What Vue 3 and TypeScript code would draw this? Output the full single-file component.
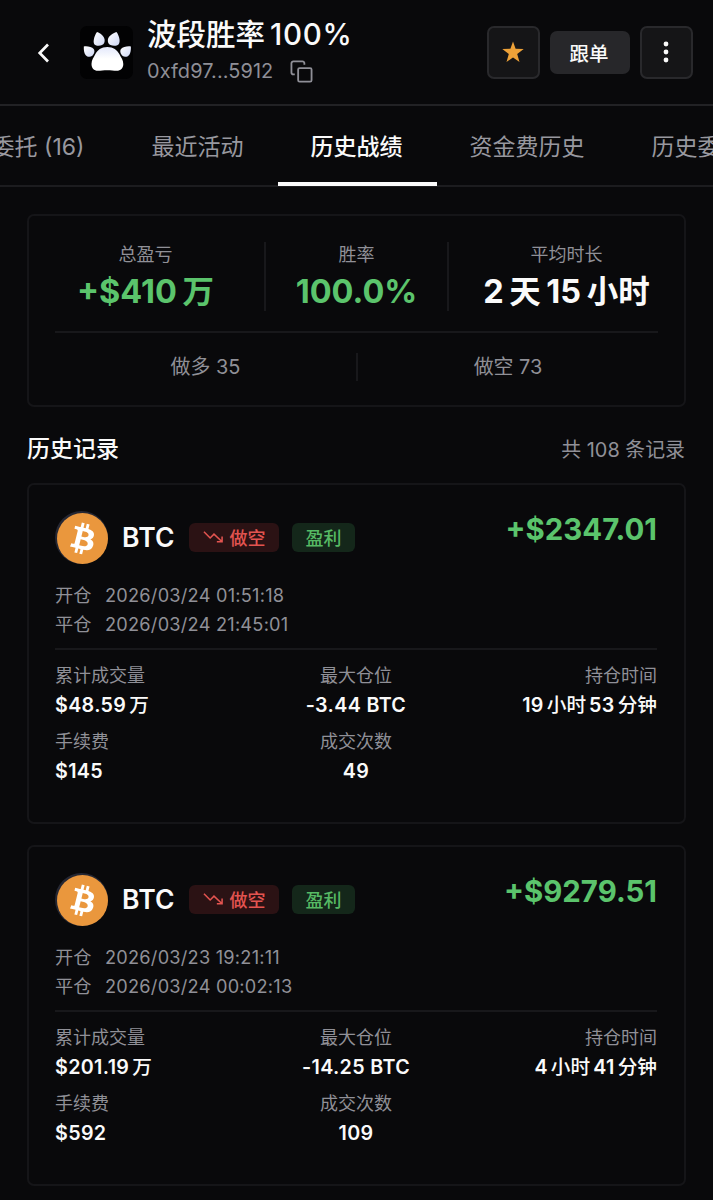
<script setup lang="ts">
interface Trade {
  pnl: string
  opened: string
  closed: string
  volume: string[]
  position: string
  duration: string[]
  fee: string
  fills: string
}

const tabs: string[] = ['当前委托 (16)', '最近活动', '历史战绩', '资金费历史', '历史委托']
const activeTab = '历史战绩'

const trades: Trade[] = [
  {
    pnl: '+$2347.01',
    opened: '2026/03/24 01:51:18',
    closed: '2026/03/24 21:45:01',
    volume: ['$48.59', '万'],
    position: '-3.44 BTC',
    duration: ['19', '小时', '53', '分钟'],
    fee: '$145',
    fills: '49',
  },
  {
    pnl: '+$9279.51',
    opened: '2026/03/23 19:21:11',
    closed: '2026/03/24 00:02:13',
    volume: ['$201.19', '万'],
    position: '-14.25 BTC',
    duration: ['4', '小时', '41', '分钟'],
    fee: '$592',
    fills: '109',
  },
]

const isHan = (part: string): boolean => /[\u4e00-\u9fff]/.test(part)
</script>

<template>
  <div class="page">
    <header class="header">
      <svg class="back" viewBox="0 0 14 22"><path d="M12 2.500 3.700 11l8.300 8.500" /></svg>
      <div class="avatar">
        <svg viewBox="0 0 53 53">
          <defs>
            <linearGradient id="toe" x1="0" y1="0" x2="1" y2="1">
              <stop offset="0" stop-color="#fff" />
              <stop offset="1" stop-color="#cdd6f4" />
            </linearGradient>
            <linearGradient id="pad" x1="0" y1="0" x2="0" y2="1">
              <stop offset="0" stop-color="#e3e8fb" />
              <stop offset=".5" stop-color="#fff" />
            </linearGradient>
          </defs>
          <g fill="url(#toe)">
            <path d="M17 6c3.800 1.200 7 4 7.600 7.500.4 2.600-.6 4.600-2.600 5.600-1.700.8-4.300 1-6.300.2-2-.8-2.400-3-1.800-6 .5-2.600 1.600-5.300 3.100-7.300z" />
            <path d="M36.500 6c-3.800 1.200-8 4-8.600 7.500-.4 2.600.6 4.600 2.600 5.600 1.700.8 4.800 1 6.800.2 2-.8 2.600-3 2.200-6-.4-2.600-1.500-5.300-3-7.300z" />
            <path d="M3.800 20.500c3.500-.5 8 .3 9.900 2.500 1.500 2.200.3 5-1.400 6.700-2.100 1.700-5 1.300-6.800-.8C4 27 3.700 24 3.800 20.500z" />
            <path d="M50.900 20.500c-3.500-.5-8 .3-9.900 2.500-1.500 2.200-.3 5 1.400 6.700 2.100 1.700 5 1.300 6.800-.8 1.500-1.900 1.800-4.900 1.700-8.400z" />
          </g>
          <path fill="url(#pad)" d="M27.300 21c6 0 10 3 12.300 7.600 1.400 3 3.700 5.400 3.700 9.400 0 4-2.600 6.800-6.600 6.800-3 0-5.700-.6-9.400-.6s-6.400.6-9.400.6c-4 0-6.400-2.800-6.400-6.800 0-4 2.200-6.400 3.600-9.400C17.400 24 21.300 21 27.300 21z" />
        </svg>
      </div>
      <div class="identity">
        <div class="name mixed"><span>波段胜率</span><span class="latin">100%</span></div>
        <div class="address">
          <span>0xfd97...5912</span>
          <svg viewBox="0 0 24 24"><path d="M15 5V3.500a2 2 0 0 0-2-2H3.500a2 2 0 0 0-2 2V13a2 2 0 0 0 2 2H5" /><rect x="8.500" y="8.500" width="14" height="14" rx="1.500" /></svg>
        </div>
      </div>
      <div class="actions">
        <button class="square">
          <svg class="star" viewBox="0 0 22 22"><path d="m11 .4 2.600 7.300 8.100.2-6.500 5 2.300 8.100-6.500-4.600L4.500 21l2.300-8.100-6.500-5 8.100-.2z" /></svg>
        </button>
        <button class="follow">跟单</button>
        <button class="square">
          <svg class="dots" viewBox="0 0 6 22"><circle cx="3" cy="3" r="2.400" /><circle cx="3" cy="11" r="2.400" /><circle cx="3" cy="19" r="2.400" /></svg>
        </button>
      </div>
    </header>

    <nav class="tabs">
      <div v-for="tab in tabs" :key="tab" class="tab" :class="{ active: tab === activeTab }">{{ tab }}</div>
    </nav>

    <main class="content">
      <section class="card summary">
        <div class="stats">
          <div class="stat">
            <div class="label">总盈亏</div>
            <div class="figure green mixed"><span>+$410</span><span class="han">万</span></div>
          </div>
          <div class="stat">
            <div class="label">胜率</div>
            <div class="figure green">100.0%</div>
          </div>
          <div class="stat">
            <div class="label">平均时长</div>
            <div class="figure mixed"><span>2</span><span class="han">天</span><span>15</span><span class="han">小时</span></div>
          </div>
        </div>
        <div class="sides">
          <div>做多 35</div>
          <div>做空 73</div>
        </div>
      </section>

      <div class="heading">
        <h2>历史记录</h2>
        <span>共 108 条记录</span>
      </div>

      <div class="list">
        <article v-for="trade in trades" :key="trade.opened" class="card trade">
          <div class="top">
            <div class="coin">
              <svg viewBox="0 0 32 32">
                <circle cx="16" cy="16" r="16" fill="#ea973d" />
                <path fill="#fff" d="M23.189 14.020c.314-2.096-1.283-3.223-3.465-3.975l.708-2.840-1.728-.430-.690 2.765c-.454-.114-.920-.220-1.385-.326l.695-2.783L15.596 6l-.708 2.839c-.376-.086-.746-.170-1.104-.260l.002-.009-2.384-.595-.460 1.846s1.283.294 1.256.312c.700.175.826.638.805 1.006l-.806 3.235c.048.012.110.030.180.057l-.183-.045-1.130 4.532c-.086.212-.303.531-.793.410.018.025-1.256-.313-1.256-.313l-.858 1.978 2.250.561c.418.105.828.215 1.231.318l-.715 2.872 1.727.430.708-2.840c.472.127.930.245 1.378.357l-.706 2.828 1.728.430.715-2.866c2.948.558 5.164.333 6.097-2.333.752-2.146-.037-3.385-1.588-4.192 1.130-.260 1.980-1.003 2.207-2.538zm-3.950 5.538c-.533 2.147-4.148.986-5.320.695l.950-3.805c1.172.293 4.929.872 4.370 3.110zm.535-5.569c-.487 1.953-3.495.960-4.470.717l.860-3.450c.975.243 4.118.696 3.610 2.733z" />
              </svg>
            </div>
            <div class="symbol">BTC</div>
            <div class="badge short">
              <svg viewBox="0 0 22 14"><path d="M1 1.500 7.500 8l4-4 8.500 8M20 6.500V12h-5.500" /></svg>
              <span>做空</span>
            </div>
            <div class="badge profit">盈利</div>
            <div class="pnl">{{ trade.pnl }}</div>
          </div>
          <div class="times">
            <div><span>开仓</span><time>{{ trade.opened }}</time></div>
            <div><span>平仓</span><time>{{ trade.closed }}</time></div>
          </div>
          <div class="details">
            <div class="cell">
              <div class="label">累计成交量</div>
              <div class="value mixed"><span v-for="part in trade.volume" :key="part" :class="{ han: isHan(part) }">{{ part }}</span></div>
            </div>
            <div class="cell center">
              <div class="label">最大仓位</div>
              <div class="value">{{ trade.position }}</div>
            </div>
            <div class="cell right">
              <div class="label">持仓时间</div>
              <div class="value mixed"><span v-for="part in trade.duration" :key="part" :class="{ han: isHan(part) }">{{ part }}</span></div>
            </div>
            <div class="cell">
              <div class="label">手续费</div>
              <div class="value">{{ trade.fee }}</div>
            </div>
            <div class="cell center">
              <div class="label">成交次数</div>
              <div class="value">{{ trade.fills }}</div>
            </div>
          </div>
        </article>
      </div>
    </main>
  </div>
</template>

<style>
html,
body {
  background: #09090b;
}
</style>

<style scoped>
.page {
  width: 713px;
  height: 1200px;
  overflow: hidden;
  box-sizing: border-box;
  background: #09090b;
  color: #fafafa;
  font-family: Inter, "Noto Sans CJK SC", sans-serif;
  -webkit-font-smoothing: antialiased;
}
.page * {
  box-sizing: border-box;
}
.mixed {
  display: inline-flex;
  gap: 0.17em;
}
.header {
  display: flex;
  align-items: center;
  height: 106px;
  padding: 1px 20px 0 36px;
  border-bottom: 2px solid #222225;
}
.back {
  width: 14px;
  height: 22px;
  fill: none;
  stroke: #fafafa;
  stroke-width: 2.7;
}
.avatar {
  width: 53px;
  height: 53px;
  margin-left: 30px;
  border-radius: 7px;
  background: #020203;
}
.avatar svg {
  display: block;
}
.identity {
  margin-left: 14px;
}
.name {
  display: flex;
  height: 37px;
  line-height: 36px;
  font-size: 29.5px;
  font-weight: 500;
}
.name .latin {
  letter-spacing: 0.7px;
}
.address {
  display: flex;
  align-items: center;
  height: 36px;
  font-size: 19.9px;
  letter-spacing: 0.1px;
  color: #8f8f97;
}
.address svg {
  width: 23px;
  height: 23px;
  margin-left: 17px;
  fill: none;
  stroke: #8f8f97;
  stroke-width: 1.9;
}
.actions {
  display: flex;
  align-items: center;
  gap: 10px;
  margin-left: auto;
}
.actions button {
  display: flex;
  align-items: center;
  justify-content: center;
  padding: 0;
  font-family: inherit;
  color: #fafafa;
}
.actions .square {
  width: 53px;
  height: 53px;
  border: 2px solid #29292c;
  border-radius: 7px;
  background: #151517;
}
.actions .follow {
  width: 80px;
  height: 43px;
  padding-right: 2px;
  border: 0;
  border-radius: 7px;
  background: #27272a;
  font-size: 19.5px;
  font-weight: 500;
}
.star {
  width: 22px;
  height: 22px;
  margin: -1px 0 0 -2px;
  fill: #eda138;
}
.dots {
  width: 6px;
  height: 22px;
  margin: -2px 0 0 -1px;
  fill: #fafafa;
}
.tabs {
  display: flex;
  justify-content: center;
  height: 81px;
  margin-left: -22px;
  border-bottom: 2px solid #1c1c1f;
}
.tab {
  flex: none;
  height: 80px;
  padding: 0 34.5px 0 32.5px;
  line-height: 82px;
  font-size: 23px;
  white-space: nowrap;
  color: #98989f;
}
.tab.active {
  border-bottom: 4px solid #fafafa;
  color: #fafafa;
  font-weight: 500;
}
.content {
  padding: 27px 27px 0;
}
.card {
  border: 2px solid #151518;
  border-radius: 7px;
}
.summary {
  height: 193px;
  padding-top: 26px;
}
.stats {
  display: grid;
  grid-template-columns: 235px 183px 1fr;
  height: 69px;
}
.stat {
  text-align: center;
}
.stat:first-child {
  padding-right: 2px;
}
.stat + .stat {
  border-left: 2px solid #18181b;
}
.label {
  height: 24px;
  line-height: 25px;
  font-size: 18px;
  color: #909097;
}
.figure {
  height: 45px;
  line-height: 51px;
  font-size: 32.5px;
  font-weight: 700;
}
.figure .han {
  font-size: 31.5px;
  font-weight: 600;
}
.green {
  color: #5bc46c;
}
.sides {
  display: grid;
  grid-template-columns: 301px 1fr;
  margin: 20px 26px 0;
  padding-top: 20px;
  border-top: 2px solid #18181b;
  text-align: center;
  font-size: 19.9px;
  line-height: 29px;
  color: #909097;
}
.sides div + div {
  height: 28px;
  border-left: 2px solid #18181b;
}
.heading {
  display: flex;
  align-items: center;
  justify-content: space-between;
  height: 76px;
  padding: 6px 1px 0 0;
  font-size: 19.9px;
  color: #909097;
}
.heading h2 {
  margin: -2px 0 0;
  font-size: 23px;
  font-weight: 500;
  color: #fafafa;
}
.list {
  display: grid;
  gap: 21px;
}
.trade {
  height: 341px;
  padding: 25px 27px 0 26px;
}
.top {
  display: flex;
  align-items: center;
  height: 54px;
}
.coin {
  width: 53px;
  height: 53px;
  padding: 2px 0 0 2px;
  border-radius: 50%;
  background: #252733;
}
.coin svg {
  display: block;
  width: 51px;
  height: 51px;
}
.symbol {
  width: 53px;
  margin-left: 14px;
  font-size: 26.5px;
  font-weight: 600;
  letter-spacing: 0.2px;
}
.badge {
  display: flex;
  align-items: center;
  justify-content: center;
  height: 29px;
  border-radius: 6px;
  font-size: 18px;
  font-weight: 500;
}
.short {
  width: 90px;
  gap: 6px;
  margin-left: 14px;
  background: #2b1214;
  color: #e35450;
}
.short svg {
  width: 21px;
  height: 14px;
  fill: none;
  stroke: currentColor;
  stroke-width: 1.6;
}
.profit {
  width: 63px;
  margin-left: 13px;
  background: #14271a;
  color: #56b964;
}
.pnl {
  margin: -16px 0 0 auto;
  font-size: 29.4px;
  font-weight: 700;
  color: #5bc46c;
}
.times {
  height: 86px;
  padding-top: 17px;
  border-bottom: 2px solid #18181b;
  font-size: 18.2px;
  line-height: 29px;
  color: #909097;
}
.times div {
  display: flex;
  height: 29px;
}
.times span {
  width: 50px;
}
.times time {
  letter-spacing: 0.23px;
}
.details {
  display: grid;
  grid-template-columns: 1fr 1fr 1fr;
  row-gap: 6px;
  padding-top: 10px;
}
.center {
  text-align: center;
}
.right {
  text-align: right;
}
.cell .label {
  height: 30px;
  line-height: 31px;
}
.value {
  height: 30px;
  line-height: 31px;
  font-size: 19.7px;
  font-weight: 600;
  letter-spacing: 0.35px;
}
.value .han {
  font-weight: 500;
  letter-spacing: 0;
}
.value.mixed {
  gap: 0.15em;
}
</style>
